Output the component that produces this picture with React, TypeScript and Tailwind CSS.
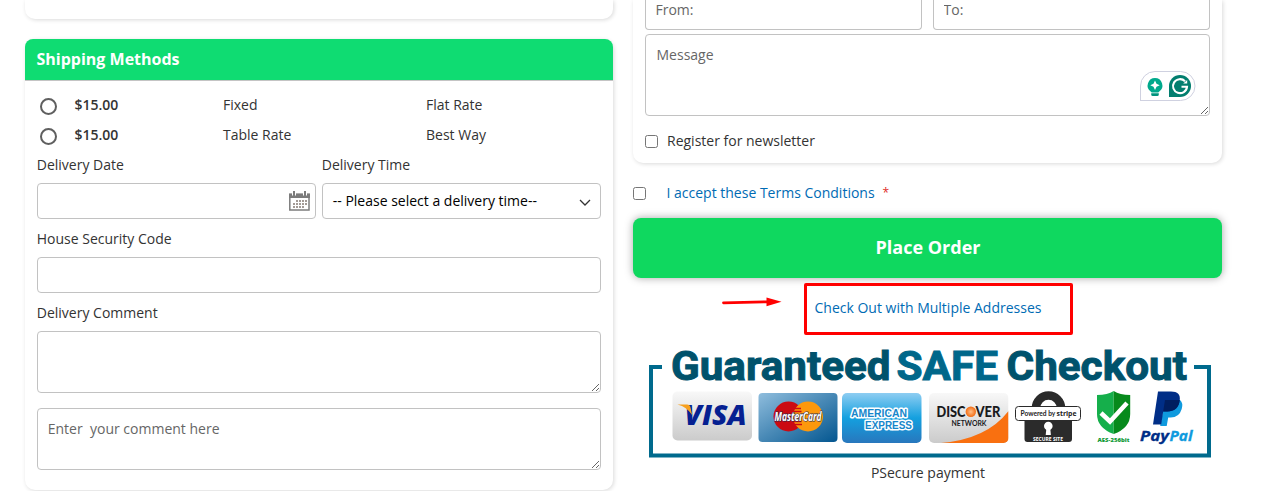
import { useState } from 'react';

const shippingMethods = [
  { id: 'flatrate', price: '$15.00', method: 'Fixed', carrier: 'Flat Rate' },
  { id: 'tablerate', price: '$15.00', method: 'Table Rate', carrier: 'Best Way' },
];

const field = 'block w-full border border-[#c2c2c2] rounded-[4px] bg-white outline-none';
const checkbox = 'w-[13px] h-[13px] border border-[#767676] rounded-[2.5px] bg-white appearance-none shrink-0 checked:bg-[#1979c3]';

function CalendarIcon() {
  return (
    <svg width="21" height="20" viewBox="0 0 21 20">
      <rect x="0.800" y="3.500" width="19.200" height="15.500" fill="#fff" stroke="#7c7c7c" strokeWidth="1.500" />
      <rect x="0" y="2.500" width="21" height="4.500" fill="#7c7c7c" />
      <path d="M5 0v4.500M16 0v4.500" stroke="#fff" strokeWidth="4" />
      <path d="M5 0v5M16 0v5" stroke="#7c7c7c" strokeWidth="2" />
      <path
        d="M7 10h11M4 13h14M4 16h11"
        stroke="#857b74"
        strokeWidth="1.600"
        strokeDasharray="2 1"
      />
    </svg>
  );
}

function GrammarWidget() {
  return (
    <svg width="56" height="31" viewBox="0 0 56 31">
      <path d="M.5 30V15A14.5 14.5 0 0 1 15 .5h25.500a14.500 14.500 0 0 1 0 29H.5Z" fill="#fff" stroke="#cfd1e0" />
      <path d="M15 7a7.400 7.400 0 0 0-4.300 13.400l1 1.100h6.600l1-1.100A7.400 7.400 0 0 0 15 7Z" fill="#00a98c" />
      <path d="M15 9.500l1.500 3.200 3.200 1.500-3.200 1.500L15 18.900l-1.500-3.200-3.200-1.500 3.200-1.500Z" fill="#fff" />
      <path d="M11.200 22.200h7.600v1.200a1.500 1.500 0 0 1-1.500 1.500h-4.600a1.500 1.500 0 0 1-1.500-1.500Z" fill="#00937c" />
      <path d="M29 26V15a11 11 0 1 1 11 11Z" fill="#027e6f" />
      <path d="M45 10.200a7 7 0 1 0 2 5.600h-5.500" fill="none" stroke="#fff" strokeWidth="2.100" />
      <path d="M47.200 9v3.600h-4Z" fill="#fff" />
    </svg>
  );
}

function SafeCheckoutBanner() {
  return (
    <svg width="580" height="120" viewBox="640 340 580 120" className="block">
      <defs>
        <linearGradient id="visaBg" x1="0" y1="0" x2="0" y2="1">
          <stop offset="0" stopColor="#f8f8f8" />
          <stop offset="1" stopColor="#cbcbcb" />
        </linearGradient>
        <linearGradient id="mcBg" x1="0" y1="0" x2="1" y2="1">
          <stop offset="0" stopColor="#8fbddd" />
          <stop offset="0.5" stopColor="#4788b5" />
          <stop offset="1" stopColor="#035690" />
        </linearGradient>
        <linearGradient id="amexBg" x1="0" y1="0" x2="0" y2="1">
          <stop offset="0" stopColor="#8ecdf2" />
          <stop offset="0.5" stopColor="#14a0df" />
          <stop offset="1" stopColor="#2877bd" />
        </linearGradient>
        <radialGradient id="discoverO">
          <stop offset="0" stopColor="#ffc08a" />
          <stop offset="1" stopColor="#f36b12" />
        </radialGradient>
        <clipPath id="discoverClip">
          <rect x="929" y="393" width="79.500" height="50" rx="5" />
        </clipPath>
      </defs>

      <path d="M662 367h-11v88.500h558V367h-15" fill="none" stroke="#006a8d" strokeWidth="4" />

      <g fontFamily="Roboto, sans-serif" fontSize="41" fontWeight="700" strokeWidth="1">
        <text x="671" y="379.500" textLength="219.500" lengthAdjust="spacingAndGlyphs" fill="#00526c" stroke="#00526c">Guaranteed</text>
        <text x="896.500" y="379.500" textLength="101.500" lengthAdjust="spacingAndGlyphs" fill="#00678a" stroke="#00678a">SAFE</text>
        <text x="1006.500" y="379.500" textLength="180.500" lengthAdjust="spacingAndGlyphs" fill="#00526c" stroke="#00526c">Checkout</text>
      </g>

      {/* Visa */}
      <rect x="672.500" y="391.500" width="79.500" height="49" rx="5" fill="url(#visaBg)" />
      <text x="684.500" y="424.500" fontFamily="Open Sans, sans-serif" fontSize="28" fontWeight="800" fontStyle="italic" textLength="62" lengthAdjust="spacingAndGlyphs" fill="#052091">VISA</text>
      <path d="M677.500 404.500h9.500q3 0 3.500 3l1.600 7.500q-5-8-14.600-10.500Z" fill="#f7a01d" />

      {/* MasterCard */}
      <rect x="758.500" y="393" width="79" height="49" rx="4" fill="url(#mcBg)" />
      <circle cx="788.500" cy="416.500" r="15" fill="#cb0a12" />
      <circle cx="808" cy="416.500" r="15" fill="#fd980c" />
      <path d="M795 408.500h6M793.500 411.500h8M793.500 421.500h8M795 424.500h7" stroke="#cb0a12" strokeWidth="1.300" />
      <text x="774.500" y="420.500" fontFamily="Open Sans, sans-serif" fontSize="11.500" fontWeight="700" fontStyle="italic" textLength="47" lengthAdjust="spacingAndGlyphs" fill="#fff" stroke="#222a50" strokeWidth="1.200" paintOrder="stroke">MasterCard</text>

      {/* American Express */}
      <rect x="842" y="393" width="79.500" height="50" rx="5" fill="url(#amexBg)" />
      <g fontFamily="Liberation Sans, sans-serif" fontSize="10.500" fontWeight="700" fill="#1686cb" stroke="#fff" strokeWidth="3" paintOrder="stroke" strokeLinejoin="round">
        <text x="851" y="416.500" textLength="56" lengthAdjust="spacingAndGlyphs">AMERICAN</text>
        <text x="865" y="428.500" textLength="47" lengthAdjust="spacingAndGlyphs">EXPRESS</text>
      </g>

      {/* Discover */}
      <g clipPath="url(#discoverClip)">
        <rect x="929" y="393" width="79.500" height="50" fill="url(#visaBg)" />
        <path d="M941 443q46-4 67.500-32v32Z" fill="#f97010" />
      </g>
      <g fontFamily="Lato, sans-serif" fill="#191a1c">
        <text x="936.500" y="416.700" fontSize="14.500" fontWeight="900" textLength="29" lengthAdjust="spacingAndGlyphs">DISC</text>
        <text x="975.500" y="416.700" fontSize="14.500" fontWeight="900" textLength="25" lengthAdjust="spacingAndGlyphs">VER</text>
        <text x="951.500" y="426" fontSize="7.800" fontWeight="700" textLength="35" lengthAdjust="spacingAndGlyphs">NETWORK</text>
      </g>
      <circle cx="970.800" cy="411.800" r="5.200" fill="url(#discoverO)" />

      {/* Stripe padlock */}
      <path d="M1036 410v-2a12.500 12.500 0 0 1 25 0v2" fill="none" stroke="#2b2b2b" strokeWidth="8.500" />
      <path d="M1024.500 419h47.500v20a3 3 0 0 1-3 3h-41.500a3 3 0 0 1-3-3Z" fill="#2b2b2b" />
      <rect x="1015.500" y="406.500" width="65" height="14" rx="3" fill="#fff" stroke="#2b2b2b" />
      <text x="1020.500" y="416" fontFamily="Lato, sans-serif" fontSize="6.600" fontWeight="700" fill="#222">Powered by</text>
      <text x="1056.500" y="416" fontFamily="Open Sans, sans-serif" fontSize="7.800" fontWeight="700" textLength="20" lengthAdjust="spacingAndGlyphs" fill="#222">stripe</text>
      <circle cx="1048.300" cy="426" r="4.300" fill="#fff" />
      <path d="M1046.500 427h3.600l.8 8h-5.200Z" fill="#fff" />
      <text x="1033" y="441" fontFamily="Open Sans, sans-serif" fontSize="5.500" fontWeight="700" textLength="30" lengthAdjust="spacingAndGlyphs" fill="#fff">SECURE SITE</text>

      {/* AES shield */}
      <path d="M1113.700 391q-6 4-16.700 4v19q0 14 16.700 20Z" fill="#15af4b" />
      <path d="M1113.700 391q6 4 16.500 4v19q0 14-16.500 20Z" fill="#078a1c" />
      <path d="M1101 413l9 8.500 17-18.500" fill="none" stroke="#fff" strokeWidth="4.500" />
      <text x="1097.500" y="442" fontFamily="Open Sans, sans-serif" fontSize="5.800" fontWeight="800" textLength="32" lengthAdjust="spacingAndGlyphs" fill="#0f9a36">AES-256bit</text>

      {/* PayPal */}
      <path d="M1165 400h15q3.500 3 1.700 9-2.500 8.500-11 8.500h-2.500l-1.500 8.500h-6.500Z" fill="#0f9ade" />
      <path d="M1158 391.500h13q10 0 8.700 9-1.500 11-12.500 11h-4l-2 13h-8.200Z" fill="#002e87" />
      <path d="M1165 400h14.700q-1 11-12.500 11.500h-4Z" fill="#001e60" />
      <g fontFamily="Open Sans, sans-serif" fontSize="15" fontWeight="700" fontStyle="italic" strokeWidth="0.300">
        <text x="1140" y="440.500" textLength="29" lengthAdjust="spacingAndGlyphs" fill="#002e87" stroke="#002e87">Pay</text>
        <text x="1169.500" y="440.500" textLength="23" lengthAdjust="spacingAndGlyphs" fill="#0f9ade" stroke="#0f9ade">Pal</text>
      </g>
    </svg>
  );
}

function ShippingPanel() {
  const [selected, setSelected] = useState<string | null>(null);

  return (
    <div className="w-[588px] shrink-0">
      <div className="h-[19px] rounded-b-[10px] shadow-[1px_1px_4px_rgba(0,0,0,0.15)]" />

      <section className="mt-5 h-[451px] rounded-[10px] shadow-[1px_1px_4px_rgba(0,0,0,0.15)]">
        <h2 className="h-[42px] px-[11.5px] leading-[41px] rounded-t-[8px] bg-[#0fdc72] border-b border-[#c4c4c4] text-white text-[16px] font-bold">
          Shipping Methods
        </h2>
        <div className="pl-[11.75px] pr-3 pt-[9px]">
          {shippingMethods.map((m) => (
            <label key={m.id} className="flex h-[30px] leading-[30px]">
              <input
                type="radio"
                name="shipping"
                checked={selected === m.id}
                onChange={() => setSelected(m.id)}
                className="appearance-none w-[17px] h-[17px] mt-2 ml-[3px] mr-[17.75px] rounded-full border-2 border-[#5f5f5f] checked:bg-[#5f5f5f]"
              />
              <span className="w-[148.5px] font-semibold">{m.price}</span>
              <span className="w-[203px]">{m.method}</span>
              <span>{m.carrier}</span>
            </label>
          ))}

          <div className="flex gap-[6px]">
            <div className="w-[279px]">
              <label className="block h-[33px] leading-[30px]">Delivery Date</label>
              <div className="flex items-center justify-end h-9 pr-[5px] border border-[#c2c2c2] rounded-[4px]">
                <CalendarIcon />
              </div>
            </div>
            <div className="w-[279px]">
              <label className="block h-[33px] leading-[30px]">Delivery Time</label>
              <div className="flex items-center justify-between h-9 pl-[10px] pr-[9px] border border-[#c2c2c2] rounded-[4px] text-black">
                <span>-- Please select a delivery time--</span>
                <svg width="12" height="8" viewBox="0 0 12 8" className="mt-[3px]">
                  <path d="M1 1l5 5 5-5" fill="none" stroke="#333" strokeWidth="1.300" />
                </svg>
              </div>
            </div>
          </div>

          <label className="block mt-[5px] h-[33px] leading-[30px]">House Security Code</label>
          <input className={`${field} h-9 px-[10px]`} />

          <label className="block mt-[5px] h-[33px] leading-[30px]">Delivery Comment</label>
          <textarea className={`${field} h-[62px] px-[10px] py-[10px]`} />
          <textarea
            placeholder="Enter  your comment here"
            className={`${field} mt-[15px] h-[62px] px-[10px] py-[10px] placeholder:text-[#666]`}
          />
        </div>
      </section>
    </div>
  );
}

function OrderPanel() {
  return (
    <div className="w-[589px] shrink-0">
      <section className="h-[163px] px-3 rounded-b-[10px] shadow-[1px_1px_4px_rgba(0,0,0,0.15)]">
        <div className="flex gap-[11px]">
          <input placeholder="From:" className={`${field} h-[30px] pl-[9.5px] pb-[11px] border-t-0 rounded-t-none placeholder:text-[#666]`} />
          <input placeholder="To:" className={`${field} h-[30px] pl-[9.5px] pb-[11px] border-t-0 rounded-t-none placeholder:text-[#666]`} />
        </div>
        <div className="relative mt-1">
          <textarea placeholder="Message" className={`${field} h-[82px] px-[10.5px] py-[10px] placeholder:text-[#666]`} />
          <div className="absolute right-[14px] bottom-[14px]">
            <GrammarWidget />
          </div>
        </div>
        <label className="flex items-center gap-[9px] mt-[10px] h-[30px]">
          <input type="checkbox" className={checkbox} />
          Register for newsletter
        </label>
      </section>

      <label className="flex items-center mt-[15px] h-[30px] text-[#006bb4]">
        <input type="checkbox" className={`${checkbox} mr-[20.5px]`} />
        I accept these Terms Conditions
        <span className="ml-[8px] text-[12px] text-[#e02b27]">*</span>
      </label>

      <button className="block w-full h-[60px] mt-[10px] pb-[2px] pl-px rounded-[8px] bg-[#0fd85f] text-white text-[18px] font-bold shadow-[0_0_8px_rgba(0,0,0,0.35)]">
        Place Order
      </button>

      <div className="flex mt-[5px] pl-[89px]">
        <svg width="60" height="12" viewBox="0 0 60 12" className="mt-[13px] mr-[22px]">
          <path d="M1.500 6.800L46 5.800" stroke="#f00" strokeWidth="2.800" strokeLinecap="round" />
          <path d="M44.500 1.500L59.500 5.700 44.500 10.300Z" fill="#f00" />
        </svg>
        <div className="w-[269px] h-[52px] pl-[7.5px] border-[3px] border-[#ff0000] rounded-[2px] leading-[43px]">
          <a className="text-[#006bb4]">Check Out with Multiple Addresses</a>
        </div>
      </div>

      <div className="mt-[5px] ml-[7px]">
        <SafeCheckoutBanner />
      </div>
      <p className="h-[30px] leading-[26px] pl-px text-center">PSecure payment</p>
    </div>
  );
}

export default function App() {
  return (
    <main className="flex gap-5 w-[1269px] h-[491px] pl-[25px] overflow-hidden bg-white font-['Open_Sans',sans-serif] text-[14px] leading-5 text-[#333]">
      <ShippingPanel />
      <OrderPanel />
    </main>
  );
}
